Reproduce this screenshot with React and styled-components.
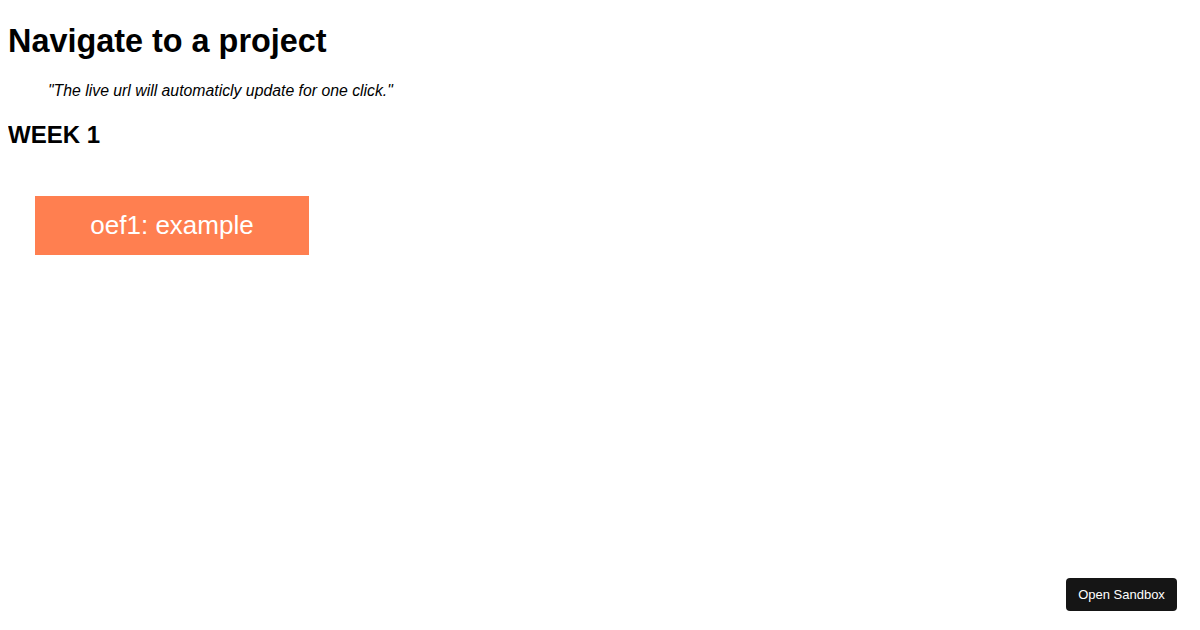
import React from "react";
import styled, {createGlobalStyle} from "styled-components";

const projects = [{id: "oef1", label: "oef1: example"}];

const App = () => {
    return (
        <>
            <GlobalStyle/>
            <Title>Navigate to a project</Title>
            <Quote>"The live url will automaticly update for one click."</Quote>
            <Week>WEEK 1</Week>
            <ProjectList>
                {projects.map((item) => (
                    <ProjectButton key={item.id}>{item.label}</ProjectButton>
                ))}
            </ProjectList>
            <SandboxButton>Open Sandbox</SandboxButton>
        </>
    );
};

const GlobalStyle = createGlobalStyle`
  body {
    margin: 8px;
    background: #fff;
    color: #000;
    font-family: "Liberation Sans", Arial, sans-serif;
  }
`;

const Title = styled.h1`
  font-size: 32.4px;
  font-weight: bold;
  margin: 14.5px 0 22.5px;
`;

const Quote = styled.blockquote`
  margin: 16px 40px;
  font-size: 15.8px;
  font-style: italic;
`;

const Week = styled.h2`
  font-size: 24px;
  font-weight: bold;
  margin: 21px 0 19.92px;
`;

const ProjectList = styled.div`
  display: flex;
  flex-wrap: wrap;
  gap: 1rem;
  padding: 27px 27px;
`;

const ProjectButton = styled.button`
  width: 274px;
  height: 59px;
  border: none;
  background-color: #ff7f50;
  color: #fff;
  font-size: 26px;
  font-family: "Liberation Sans", Arial, sans-serif;
  cursor: pointer;
`;

const SandboxButton = styled.button`
  position: fixed;
  right: 23px;
  bottom: 19px;
  width: 111px;
  height: 33px;
  border: none;
  border-radius: 4px;
  background-color: #151515;
  color: #fff;
  font-size: 13px;
  font-family: "Liberation Sans", Arial, sans-serif;
  cursor: pointer;
`;

export default App;
